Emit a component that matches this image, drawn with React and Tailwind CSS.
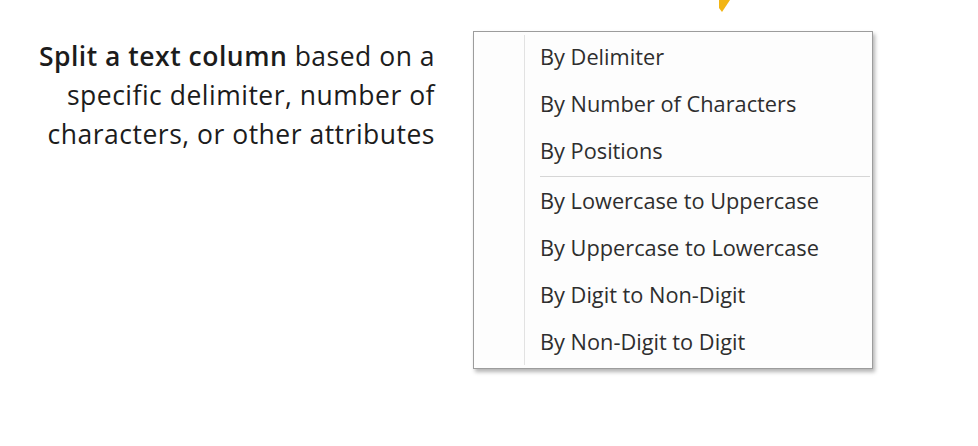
import React from 'react';

const groups = [
  ['By Delimiter', 'By Number of Characters', 'By Positions'],
  ['By Lowercase to Uppercase', 'By Uppercase to Lowercase', 'By Digit to Non-Digit', 'By Non-Digit to Digit'],
];

const MenuItem = ({ label }) => (
  <div className="h-[47px] flex items-center pl-[15px] text-[21.75px] text-[#2e2e2e]">
    {label}
  </div>
);

const App = () => {
  return (
    <div className="w-[978px] h-[446px] bg-white relative overflow-hidden">
      {/* cursor tip peeking in from the top */}
      <svg className="absolute left-[716px] top-0" width="16" height="14" viewBox="0 0 16 14">
        <polygon points="3,0 14,0 6,12 3,8" fill="#f2b514" />
      </svg>

      <div className="flex pt-[31px]">
        {/* Description */}
        <div className="w-[435px] pt-[6px] text-right text-[26.5px] leading-[39px] text-[#1c1c1c] font-['Open_Sans',sans-serif] tracking-[0.5px]">
          <span className="font-semibold">Split a text column</span> based on a
          <br />
          specific delimiter, number of
          <br />
          characters, or other attributes
        </div>

        {/* Split column menu */}
        <div className="ml-[38px] w-[400px] h-[338px] bg-[#fdfdfd] border border-[#9c9c9c] shadow-[2px_3px_4px_rgba(0,0,0,0.3)] flex font-['Open_Sans',sans-serif]">
          <div className="w-[51px] border-r border-[#e2e2e2] my-[3px]" />
          <div className="flex-1 py-[2px]">
            {groups.map((group, gi) => (
              <div key={gi}>
                {gi > 0 && (
                  <div className="py-[1px] pl-[15px] pr-[2px]">
                    <div className="h-px bg-[#d6d6d6]" />
                  </div>
                )}
                {group.map((label) => (
                  <MenuItem key={label} label={label} />
                ))}
              </div>
            ))}
          </div>
        </div>
      </div>
    </div>
  );
};

export default App;
